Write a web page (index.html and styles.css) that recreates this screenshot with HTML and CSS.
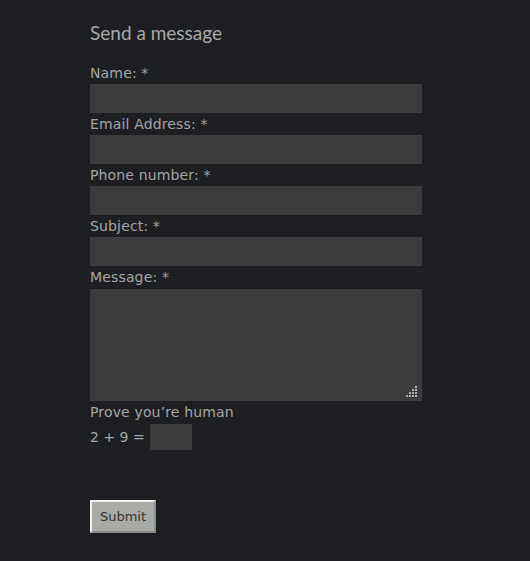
FILE: index.html
```html
<!DOCTYPE html>
<html>
<head>
<meta charset="utf-8">
<link rel="stylesheet" href="styles.css">
</head>
<body>
<div class="page">
  <h2 class="title">Send a message</h2>
  <form class="form">
    <label class="lbl">Name: *</label>
    <input class="field" type="text">
    <label class="lbl">Email Address: *</label>
    <input class="field" type="text">
    <label class="lbl">Phone number: *</label>
    <input class="field" type="text">
    <label class="lbl">Subject: *</label>
    <input class="field" type="text">
    <label class="lbl lbl-msg">Message: *</label>
    <div class="area-wrap">
      <textarea class="area"></textarea>
      <svg class="grip" width="14" height="14" viewBox="0 0 14 14">
        <g fill="#b0b0b0">
          <rect x="11" y="1" width="2" height="2"/>
          <rect x="8" y="4" width="2" height="2"/>
          <rect x="11" y="4" width="2" height="2"/>
          <rect x="5" y="7" width="2" height="2"/>
          <rect x="8" y="7" width="2" height="2"/>
          <rect x="11" y="7" width="2" height="2"/>
          <rect x="2" y="10" width="2" height="2"/>
          <rect x="5" y="10" width="2" height="2"/>
          <rect x="8" y="10" width="2" height="2"/>
          <rect x="11" y="10" width="2" height="2"/>
        </g>
      </svg>
    </div>
    <label class="lbl">Prove you’re human</label>
    <div class="captcha">
      <span class="sum">2 + 9 =</span>
      <input class="small" type="text">
    </div>
    <button class="submit" type="button">Submit</button>
  </form>
</div>
</body>
</html>
```
FILE: styles.css
```css
html, body {
  margin: 0;
  padding: 0;
  background: #1d1e22;
  height: 100%;
}
.page {
  padding: 19px 0 0 90px;
  width: 332px;
}
.title {
  margin: 0 0 15px 0;
  font-family: "Lato", sans-serif;
  font-weight: 400;
  font-size: 19px;
  line-height: 28px;
  color: #a9a9a9;
}
.form {
  display: flex;
  flex-direction: column;
  align-items: flex-start;
}
.lbl {
  font-family: "DejaVu Sans", sans-serif;
  font-size: 14px;
  line-height: 22px;
  color: #a6a6a6;
  letter-spacing: 0.15px;
}
.lbl-msg {
  line-height: 23px;
}
.field, .area, .small {
  box-sizing: border-box;
  border: none;
  background: #3c3c3c;
  color: #ddd;
  margin: 0;
  padding: 4px;
  outline: none;
}
.field {
  width: 332px;
  height: 29px;
}
.area-wrap {
  position: relative;
  width: 332px;
  height: 112px;
}
.area {
  width: 332px;
  height: 112px;
  resize: none;
  display: block;
}
.grip {
  position: absolute;
  right: 4px;
  bottom: 2px;
}
.captcha {
  display: flex;
  align-items: center;
  gap: 5px;
  height: 26px;
  margin-top: 1px;
}
.sum {
  font-family: "DejaVu Sans", sans-serif;
  font-size: 14px;
  color: #a6a6a6;
}
.small {
  width: 42px;
  height: 26px;
}
.submit {
  margin-top: 50px;
  width: 66px;
  height: 33px;
  box-sizing: border-box;
  background: #a8aba6;
  border: 2px solid;
  border-color: #f2f2f2 #8a8c88 #8a8c88 #f2f2f2;
  font-family: "DejaVu Sans", sans-serif;
  font-size: 13px;
  color: #333;
  padding: 0;
}
```
